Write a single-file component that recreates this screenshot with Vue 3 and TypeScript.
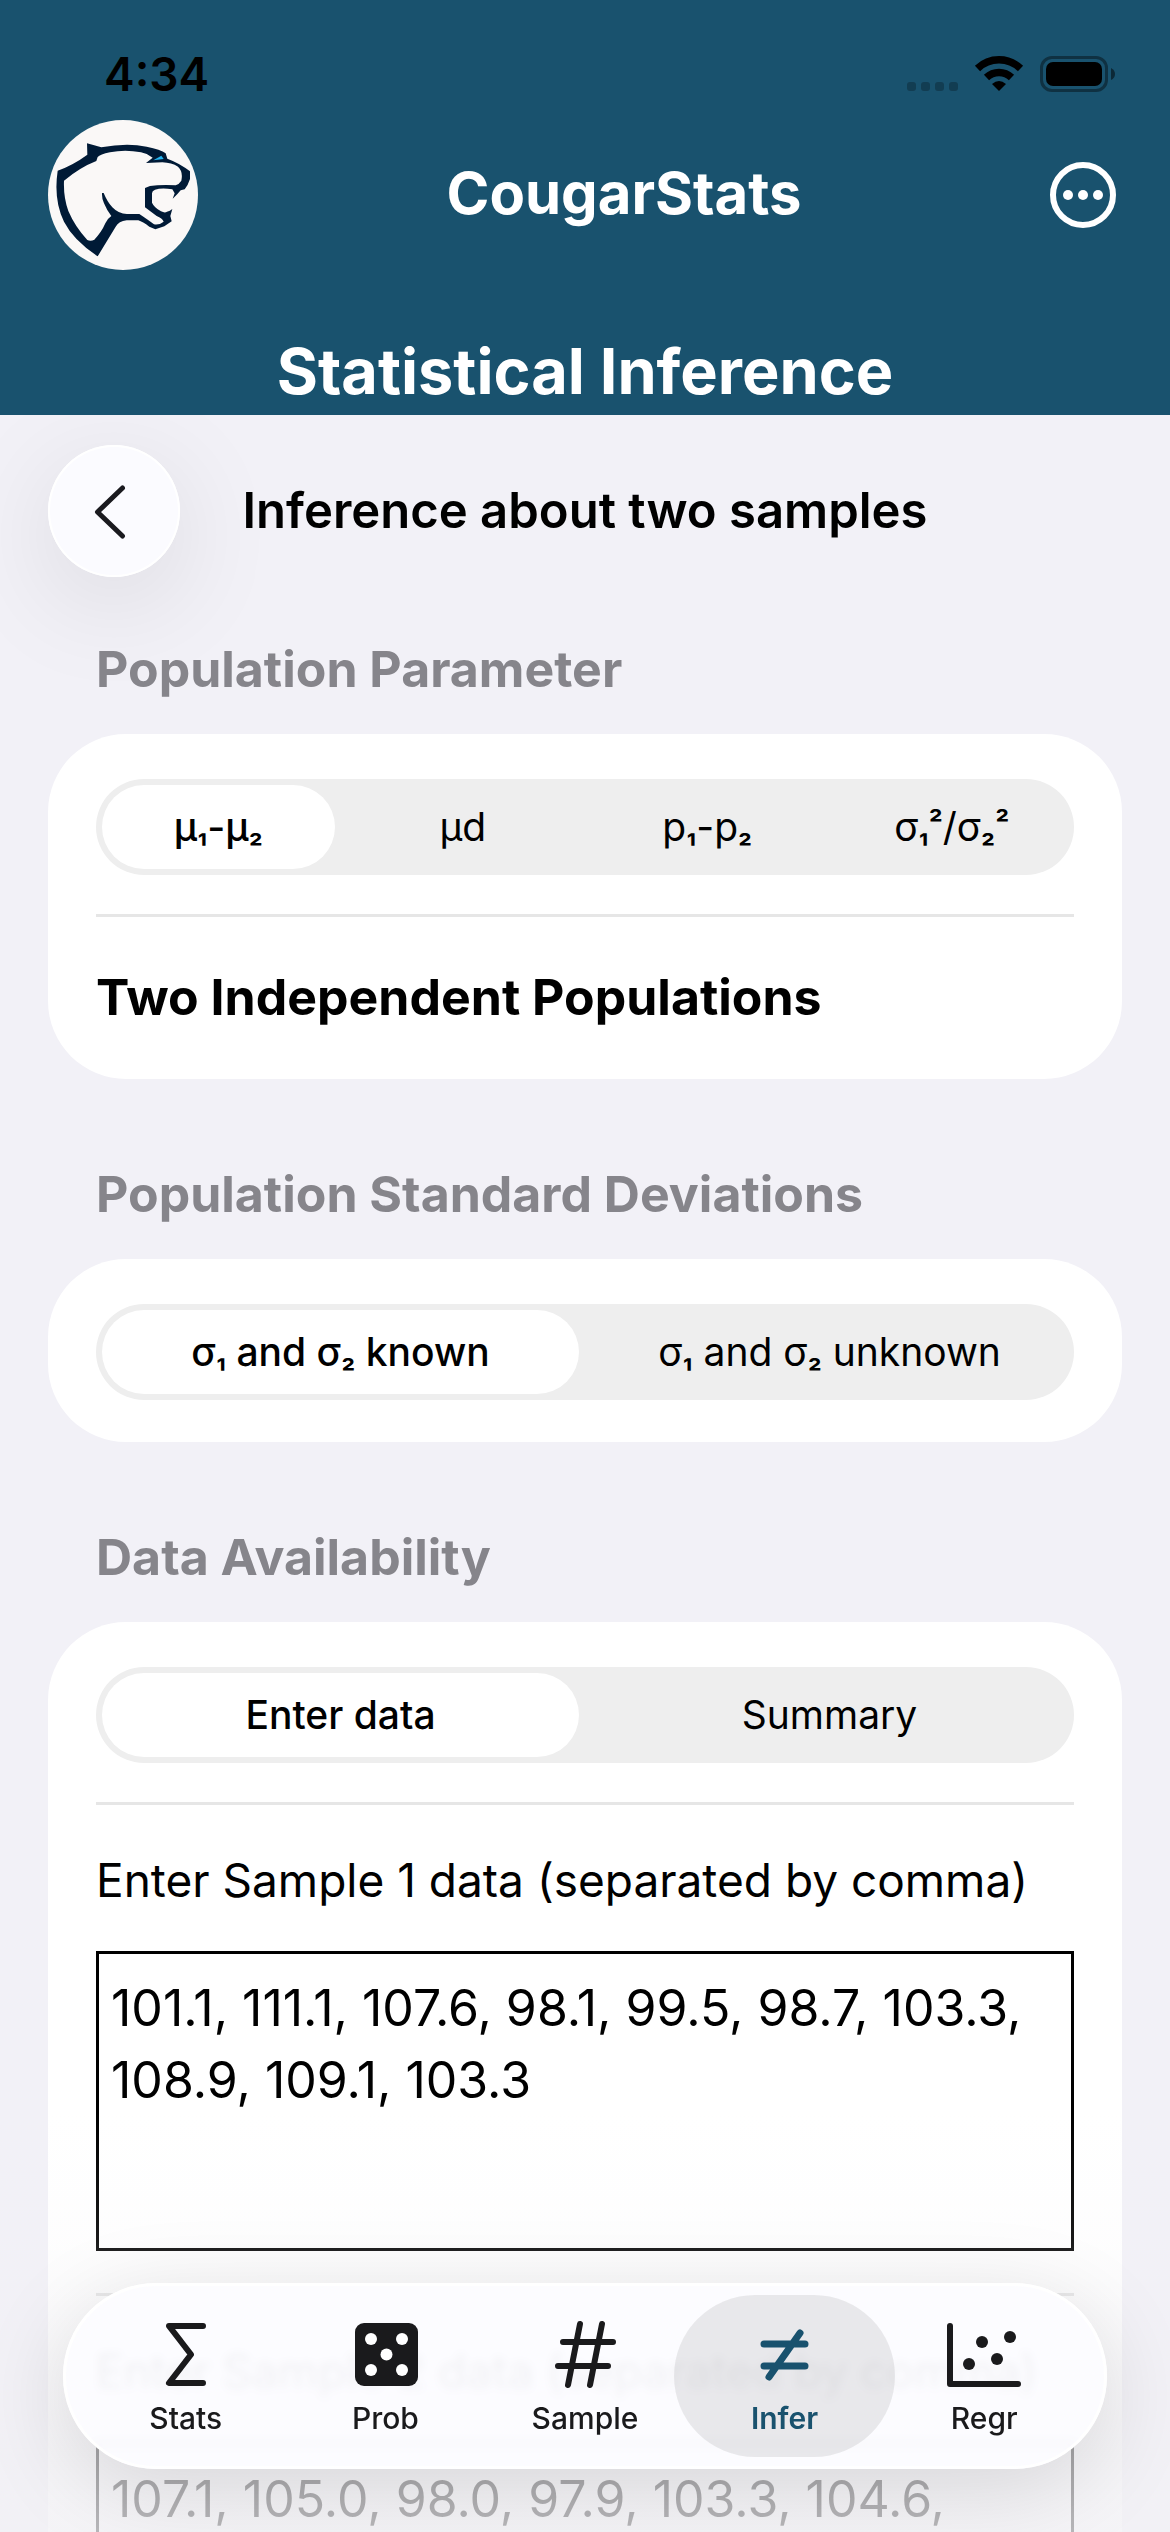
<script setup lang="ts">
import { ref } from 'vue'

interface Option {
  value: string
  label: string
}

const parameterOptions: Option[] = [
  { value: 'mean-difference', label: 'μ₁-μ₂' },
  { value: 'paired', label: 'μd' },
  { value: 'proportions', label: 'p₁-p₂' },
  { value: 'variances', label: 'σ₁²/σ₂²' },
]
const deviationOptions: Option[] = [
  { value: 'known', label: 'σ₁ and σ₂ known' },
  { value: 'unknown', label: 'σ₁ and σ₂ unknown' },
]
const sourceOptions: Option[] = [
  { value: 'data', label: 'Enter data' },
  { value: 'summary', label: 'Summary' },
]

const parameter = ref('mean-difference')
const deviations = ref('known')
const source = ref('data')
const sample1 = ref('101.1, 111.1, 107.6, 98.1, 99.5, 98.7, 103.3, 108.9, 109.1, 103.3')
const sample2 = ref('107.1, 105.0, 98.0, 97.9, 103.3, 104.6, 100.1, 98.2, 97.9')

const tabs = ['Stats', 'Prob', 'Sample', 'Infer', 'Regr']
const activeTab = ref('Infer')

// Splits a label so that its index and exponent digits can be set smaller.
function parts(label: string): string[] {
  return label.split(/([₁₂²])/).filter((part) => part !== '')
}

function markClass(part: string): string {
  if (part === '²') return 'mark mark-up'
  return part === '₁' || part === '₂' ? 'mark' : ''
}
</script>

<template>
  <div class="app">
    <header class="header">
      <div class="status">
        <span class="time">4:34</span>
        <svg class="status-icons" viewBox="0 0 209 40" aria-hidden="true">
          <g opacity="0.25">
            <rect x="0" y="28" width="9" height="9" rx="3" />
            <rect x="14" y="28" width="9" height="9" rx="3" />
            <rect x="28" y="28" width="9" height="9" rx="3" />
            <rect x="42" y="28" width="9" height="9" rx="3" />
          </g>
          <g fill="none" stroke="#000" stroke-width="7.5">
            <path d="M70.500 14.500A31 31 0 0 1 113.500 14.500" />
            <path d="M79.500 23.500A18 18 0 0 1 104.500 23.500" />
          </g>
          <path d="M92 37 85 30Q92 24 99 30Z" />
          <rect x="134.500" y="3.500" width="65" height="33" rx="10.500" fill="none" stroke="#000" stroke-opacity="0.4" stroke-width="3" />
          <rect x="139" y="8" width="56" height="24" rx="7" />
          <path d="M204 14Q208 16 208 20T204 26Z" opacity="0.5" />
        </svg>
      </div>
      <div class="brand-row">
        <svg class="logo" viewBox="54 30 450 450" role="img" aria-label="Cougar logo">
          <circle cx="279" cy="255" r="225" fill="#faf8f7" />
          <path
            fill="#001a36"
            fill-rule="evenodd"
            d="M171 100 214 112Q290 98 350 110Q392 118 407 130L412 146Q450 160 480 184V207Q474 226 464 238L452 241Q442 254 428 266L434 250 427 238Q395 233 375 239Q366 243 366 250V278Q372 292 393 304Q405 310 411 305Q420 303 427 297L421 318 425 334 403 349 376 358 358 350Q338 335 325 331H290Q266 334 257 350L203 439Q130 390 102 335Q70 270 83 182Q130 165 172 134ZM102 212Q100 262 115 303Q135 350 172 390Q182 395 193 389Q215 366 226 340Q233 325 244 318Q230 300 222 280Q215 264 216 249H221Q232 276 247 292Q268 314 295 312H328Q355 330 372 343Q388 346 401 335Q397 325 380 318L345 292V234L360 228Q390 224 437 226Q448 222 454 212Q460 185 444 170Q425 158 397 157L348 159 368 143Q350 130 333 127Q285 118 240 127Q210 133 203 141L199 153Q150 172 102 212Z"
          />
          <path d="M370 151 394 137 401 147Z" fill="#22b5f2" />
        </svg>
        <span class="brand">CougarStats</span>
        <button class="more" type="button" aria-label="More options">
          <svg viewBox="0 0 66 66" aria-hidden="true">
            <circle cx="33" cy="33" r="30" fill="none" stroke="#fff" stroke-width="6" />
            <g fill="#fff">
              <circle cx="18" cy="33" r="5" />
              <circle cx="33" cy="33" r="5" />
              <circle cx="48" cy="33" r="5" />
            </g>
          </svg>
        </button>
      </div>
      <h1 class="page-title">Statistical Inference</h1>
    </header>

    <main class="content">
      <div class="sub-bar">
        <button class="back" type="button" aria-label="Back">
          <svg viewBox="0 0 132 132" aria-hidden="true">
            <path d="M74.500 43 49.500 67 74.500 91" />
          </svg>
        </button>
        <h2 class="sub-title">Inference about two samples</h2>
      </div>

      <section class="group">
        <h3 class="heading">Population Parameter</h3>
        <div class="card">
          <div class="row">
            <div class="segments" role="radiogroup" aria-label="Population Parameter">
              <label v-for="o in parameterOptions" :key="o.value" class="segment">
                <input v-model="parameter" type="radio" name="parameter" :value="o.value" />
                <span class="segment-face"><span v-for="(part, i) in parts(o.label)" :key="i" :class="markClass(part)">{{ part }}</span></span>
              </label>
            </div>
          </div>
          <p class="row row-text">Two Independent Populations</p>
        </div>
      </section>

      <section class="group">
        <h3 class="heading">Population Standard Deviations</h3>
        <div class="card">
          <div class="row">
            <div class="segments" role="radiogroup" aria-label="Population Standard Deviations">
              <label v-for="o in deviationOptions" :key="o.value" class="segment">
                <input v-model="deviations" type="radio" name="deviations" :value="o.value" />
                <span class="segment-face"><span v-for="(part, i) in parts(o.label)" :key="i" :class="markClass(part)">{{ part }}</span></span>
              </label>
            </div>
          </div>
        </div>
      </section>

      <section class="group">
        <h3 class="heading">Data Availability</h3>
        <div class="card">
          <div class="row">
            <div class="segments" role="radiogroup" aria-label="Data Availability">
              <label v-for="o in sourceOptions" :key="o.value" class="segment">
                <input v-model="source" type="radio" name="source" :value="o.value" />
                <span class="segment-face">{{ o.label }}</span>
              </label>
            </div>
          </div>
          <div class="row field">
            <label for="sample1">Enter Sample 1 data (separated by comma)</label>
            <textarea id="sample1" v-model="sample1" spellcheck="false"></textarea>
          </div>
          <div class="row field">
            <label for="sample2">Enter Sample 2 data (separated by comma)</label>
            <textarea id="sample2" v-model="sample2" spellcheck="false"></textarea>
          </div>
        </div>
      </section>
    </main>

    <div class="fade" aria-hidden="true"></div>
    <nav class="tab-bar" aria-label="Main">
      <button
        v-for="tab in tabs"
        :key="tab"
        type="button"
        class="tab"
        :class="{ active: tab === activeTab }"
        @click="activeTab = tab"
      >
        <svg class="tab-icon" viewBox="0 0 72 72" aria-hidden="true">
          <path v-if="tab === 'Stats'" class="line" d="M53 7H19L41 35.500 19 64H53" />
          <g v-else-if="tab === 'Prob'">
            <rect x="6" y="4" width="63" height="63" rx="9" fill="currentColor" />
            <g fill="#fff">
              <circle cx="22" cy="20" r="6" />
              <circle cx="53" cy="20" r="6" />
              <circle cx="37.500" cy="35.500" r="6" />
              <circle cx="22" cy="51" r="6" />
              <circle cx="53" cy="51" r="6" />
            </g>
          </g>
          <path v-else-if="tab === 'Sample'" class="line" d="M14 23H64M9 47H59M31 5 19 66M53 5 41 66" />
          <path v-else-if="tab === 'Infer'" class="line line-heavy" d="M15 25H56M15 47H56M51 14 20 58" />
          <g v-else>
            <path class="line" d="M2 7V65H70" />
            <g fill="currentColor">
              <circle cx="21" cy="45" r="6" />
              <circle cx="34" cy="23" r="6" />
              <circle cx="49" cy="40" r="6" />
              <circle cx="62" cy="18" r="6" />
            </g>
          </g>
        </svg>
        <span>{{ tab }}</span>
      </button>
    </nav>
  </div>
</template>

<style>
body {
  margin: 0;
  background: #f2f1f7;
}
</style>

<style scoped>
.app {
  position: relative;
  display: flex;
  flex-direction: column;
  height: 100vh;
  overflow: hidden;
  background: #f2f1f7;
  color: #000;
  font-family: Inter, "Liberation Sans", sans-serif;
}
button {
  padding: 0;
  border: 0;
  background: none;
  color: inherit;
  font: inherit;
}
h1,
h2,
h3,
p {
  margin: 0;
}
svg {
  display: block;
  overflow: visible;
}

.header {
  flex: none;
  padding-bottom: 4px;
  background: #19526e;
  color: #fff;
}
.status {
  display: flex;
  align-items: center;
  justify-content: space-between;
  height: 68px;
  padding: 40px 54px 12px 104px;
  color: #000;
}
.time {
  font-size: 46px;
  font-weight: 600;
  line-height: 68px;
}
.status-icons {
  width: 209px;
  height: 40px;
}
.brand-row {
  display: flex;
  align-items: center;
  justify-content: space-between;
  padding: 0 54px 0 48px;
}
.logo {
  width: 150px;
  height: 150px;
}
.brand {
  padding-bottom: 4px;
  font-size: 58px;
  font-weight: 700;
  line-height: 72px;
}
.more {
  width: 66px;
  height: 66px;
}
.page-title {
  margin-top: 61px;
  font-size: 63px;
  font-weight: 700;
  line-height: 80px;
  text-align: center;
}

.content {
  flex: 1;
  min-height: 0;
  padding: 30px 48px 0;
  overflow-y: auto;
  scrollbar-width: none;
}
.sub-bar {
  display: grid;
  grid-template-columns: 132px 1fr 132px;
  align-items: center;
}
.back {
  width: 132px;
  height: 132px;
  border-radius: 50%;
  background: #fbfbff;
  box-shadow: inset 0 0 0 2px #fff, 0 24px 110px rgba(0, 0, 0, 0.1);
}
.back path {
  fill: none;
  stroke: #1a1a1f;
  stroke-width: 5;
  stroke-linecap: round;
  stroke-linejoin: round;
}
.sub-title {
  font-size: 49px;
  font-weight: 600;
  line-height: 60px;
  text-align: center;
  white-space: nowrap;
}
.group {
  margin-top: 85px;
}
.sub-bar + .group {
  margin-top: 62px;
}
.heading {
  margin: 0 48px 35px;
  color: #86858b;
  font-size: 50px;
  font-weight: 700;
  line-height: 60px;
}
.card {
  padding: 0 48px;
  border-radius: 78px;
  background: #fff;
}
.row {
  padding: 45px 0 39px;
}
.row + .row {
  border-top: 3px solid #e6e6e6;
}
.card > .row:last-child {
  padding-bottom: 42px;
}
.card .row.row-text {
  padding: 50px 0 52px;
  font-size: 50px;
  font-weight: 700;
  line-height: 60px;
}
.segments {
  display: flex;
  height: 96px;
  border-radius: 48px;
  background: #eee;
}
.segment {
  position: relative;
  display: flex;
  flex: 1 1 0;
}
.segment input {
  position: absolute;
  inset: 0;
  margin: 0;
  opacity: 0;
}
.segment-face {
  flex: 1;
  margin: 6px;
  border-radius: 42px;
  font-size: 39px;
  line-height: 84px;
  text-align: center;
  white-space: pre-wrap;
}
.segment input:checked + .segment-face {
  background: #fff;
  font-weight: 500;
}
.mark {
  font-size: 31px;
  font-weight: 600;
  line-height: 0;
}
.mark-up {
  vertical-align: 6px;
}
.card .row.field {
  display: flex;
  flex-direction: column;
  gap: 41px;
  padding: 45px 0 42px;
}
.field label {
  font-size: 46px;
  line-height: 60px;
  white-space: nowrap;
}
.field textarea {
  display: block;
  box-sizing: border-box;
  width: 100%;
  height: 300px;
  padding: 18px 12px;
  border: 3px solid #000;
  border-radius: 0;
  outline: 0;
  background: transparent;
  color: #000;
  font: 400 50px/72px Inter, "Liberation Sans", sans-serif;
  overflow: hidden;
  resize: none;
}

.fade {
  position: absolute;
  right: 0;
  bottom: 0;
  left: 0;
  height: 420px;
  background: linear-gradient(
    rgba(242, 241, 247, 0),
    rgba(242, 241, 245, 0.1) 30%,
    rgba(242, 241, 245, 0.68) 80%,
    rgba(242, 241, 245, 0.76)
  );
  pointer-events: none;
}
.tab-bar {
  position: absolute;
  right: 63px;
  bottom: 63px;
  left: 63px;
  display: flex;
  box-sizing: border-box;
  height: 186px;
  padding: 9px;
  border: 3px solid #fff;
  border-radius: 93px;
  background: rgba(252, 252, 255, 0.92);
  box-shadow: 0 20px 90px rgba(0, 0, 0, 0.13);
  color: #1a1a1c;
  backdrop-filter: blur(4px);
}
.tab {
  display: flex;
  flex: 1 1 0;
  flex-direction: column;
  align-items: center;
  gap: 9px;
  padding-top: 24px;
  border-radius: 81px;
  font-size: 30px;
  font-weight: 500;
  line-height: 36px;
}
.tab + .tab {
  margin-left: -22px;
}
.tab.active {
  background: rgba(0, 0, 0, 0.08);
  color: #19526e;
  font-weight: 600;
}
.tab-icon {
  width: 72px;
  height: 72px;
}
.line {
  fill: none;
  stroke: currentColor;
  stroke-width: 6;
  stroke-linecap: round;
  stroke-linejoin: round;
}
.line-heavy {
  stroke-width: 7;
}
</style>
